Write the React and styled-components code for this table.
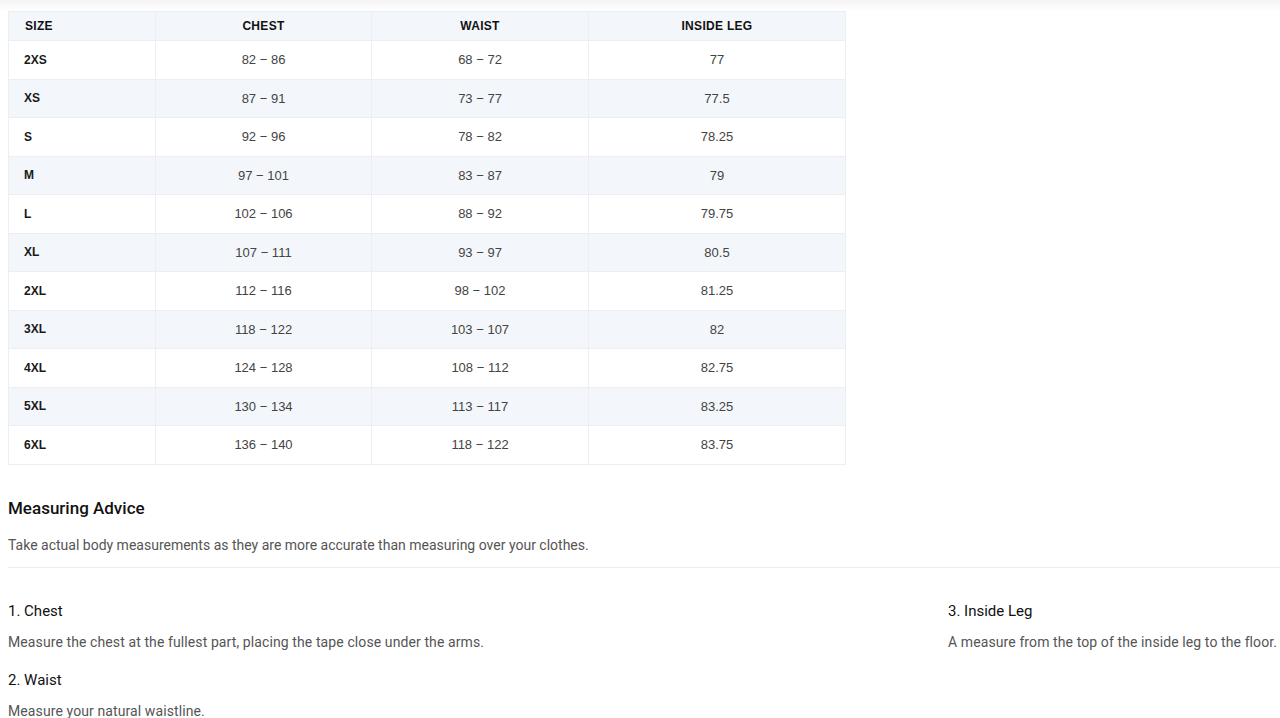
import React from 'react';
import styled, { createGlobalStyle } from 'styled-components';

const GlobalStyle = createGlobalStyle`
  body {
    margin: 0;
    background: #fff;
    font-family: Roboto, "Liberation Sans", Arial, sans-serif;
    overflow: hidden;
  }
`;

const Page = styled.div`
  width: 1280px;
`;

const TopShade = styled.div`
  height: 11px;
  background: linear-gradient(#f4f4f4, #fcfcfc 70%, #fff);
`;

const Content = styled.div`
  padding: 0 0 0 8px;
`;

const Table = styled.table`
  width: 837px;
  border-collapse: collapse;
  border: 1px solid #eceef1;
  table-layout: fixed;
`;

const HeadCell = styled.th`
  height: 28px;
  padding: 0 16px;
  background: #f3f7fb;
  border: 1px solid #eceef1;
  font-family: "Liberation Sans", Arial, sans-serif;
  font-size: 12px;
  font-weight: 700;
  letter-spacing: 0.3px;
  color: #111;
  text-align: ${(p) => (p.$left ? 'left' : 'center')};
`;

const Row = styled.tr`
  background: ${(p) => (p.$shaded ? '#f3f7fb' : '#fff')};
`;

const SizeCell = styled.td`
  height: 37.5px;
  padding: 0 15px;
  border: 1px solid #eceef1;
  font-family: "Liberation Sans", Arial, sans-serif;
  font-size: 12px;
  font-weight: 700;
  color: #1a1a1a;
`;

const Cell = styled.td`
  padding: 0 16px;
  border: 1px solid #eceef1;
  font-family: "Liberation Sans", Arial, sans-serif;
  font-size: 13px;
  color: #444;
  text-align: center;
`;

const Title = styled.h2`
  margin: 32px 0 0;
  font-size: 17px;
  line-height: 22px;
  font-weight: 500;
  color: #111;
`;

const Lead = styled.p`
  margin: 17px 0 0;
  font-size: 14px;
  line-height: 18px;
  color: #555;
`;

const Divider = styled.hr`
  margin: 13px 0 0;
  border: none;
  border-top: 1px solid #ececec;
`;

const Advice = styled.div`
  display: grid;
  grid-template-columns: 940px 1fr;
  padding-top: 34px;
`;

const Column = styled.div`
  display: flex;
  flex-direction: column;
  gap: 20px;
`;

const Item = styled.div`
  display: flex;
  flex-direction: column;
  gap: 12px;
`;

const ItemTitle = styled.div`
  font-size: 15px;
  line-height: 19px;
  color: #111;
`;

const ItemText = styled.div`
  font-size: 14px;
  line-height: 18px;
  letter-spacing: 0.1px;
  color: #555;
`;

const rows = [
  ['2XS', '82 − 86', '68 − 72', '77'],
  ['XS', '87 − 91', '73 − 77', '77.5'],
  ['S', '92 − 96', '78 − 82', '78.25'],
  ['M', '97 − 101', '83 − 87', '79'],
  ['L', '102 − 106', '88 − 92', '79.75'],
  ['XL', '107 − 111', '93 − 97', '80.5'],
  ['2XL', '112 − 116', '98 − 102', '81.25'],
  ['3XL', '118 − 122', '103 − 107', '82'],
  ['4XL', '124 − 128', '108 − 112', '82.75'],
  ['5XL', '130 − 134', '113 − 117', '83.25'],
  ['6XL', '136 − 140', '118 − 122', '83.75'],
];

const App = () => {
  return (
    <Page>
      <GlobalStyle />
      <TopShade />
      <Content>
        <Table>
          <colgroup>
            <col style={{ width: 147 }} />
            <col style={{ width: 216 }} />
            <col style={{ width: 217 }} />
            <col style={{ width: 257 }} />
          </colgroup>
          <thead>
            <tr>
              <HeadCell $left>SIZE</HeadCell>
              <HeadCell>CHEST</HeadCell>
              <HeadCell>WAIST</HeadCell>
              <HeadCell>INSIDE LEG</HeadCell>
            </tr>
          </thead>
          <tbody>
            {rows.map((r, i) => (
              <Row key={r[0]} $shaded={i % 2 === 1}>
                <SizeCell>{r[0]}</SizeCell>
                <Cell>{r[1]}</Cell>
                <Cell>{r[2]}</Cell>
                <Cell>{r[3]}</Cell>
              </Row>
            ))}
          </tbody>
        </Table>

        <Title>Measuring Advice</Title>
        <Lead>Take actual body measurements as they are more accurate than measuring over your clothes.</Lead>
        <Divider />

        <Advice>
          <Column>
            <Item>
              <ItemTitle>1. Chest</ItemTitle>
              <ItemText>Measure the chest at the fullest part, placing the tape close under the arms.</ItemText>
            </Item>
            <Item>
              <ItemTitle>2. Waist</ItemTitle>
              <ItemText>Measure your natural waistline.</ItemText>
            </Item>
          </Column>
          <Column>
            <Item>
              <ItemTitle>3. Inside Leg</ItemTitle>
              <ItemText>A measure from the top of the inside leg to the floor.</ItemText>
            </Item>
          </Column>
        </Advice>
      </Content>
    </Page>
  );
};

export default App;
